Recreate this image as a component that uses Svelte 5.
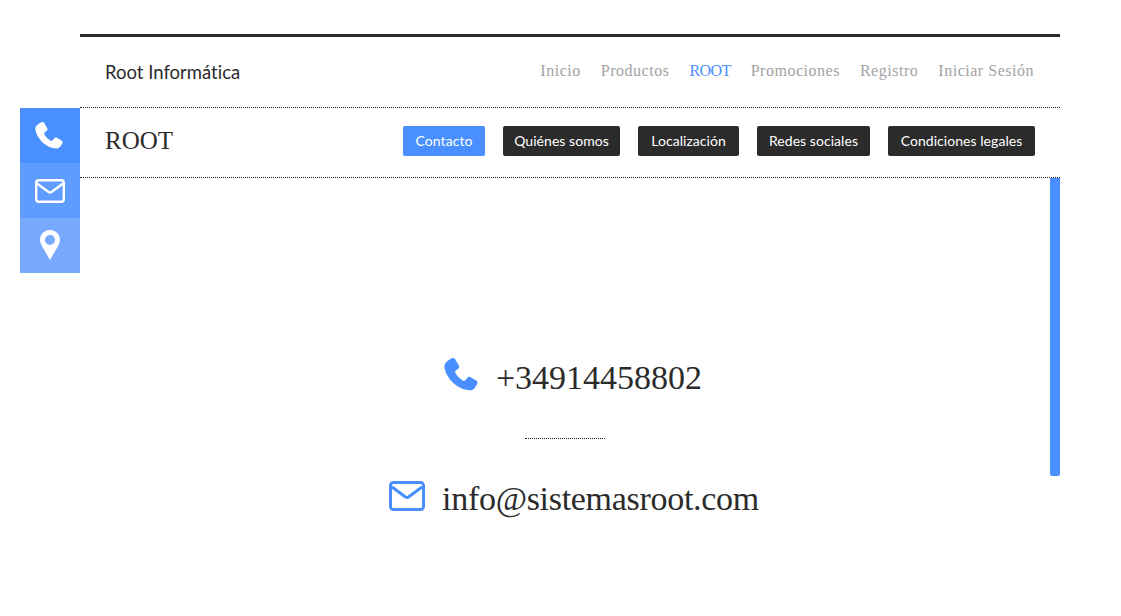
<script>
  const mainNav = [
    { label: 'Inicio' },
    { label: 'Productos' },
    { label: 'ROOT', active: true },
    { label: 'Promociones' },
    { label: 'Registro' },
    { label: 'Iniciar Sesión' }
  ];
  const tabs = ['Contacto', 'Quiénes somos', 'Localización', 'Redes sociales', 'Condiciones legales'];
  const phonePath = 'M3.200 1.500L5.500.2c.9-.5 1.900-.2 2.400.6l2.600 4.500c.4.8.3 1.600-.4 2.200L8.300 8.900c-.5.4-.6 1-.3 1.500 1.300 2.400 3.200 4.300 5.600 5.600.5.3 1.100.2 1.500-.3l1.400-1.800c.6-.7 1.400-.8 2.200-.4l4.100 2.400c.8.5 1.100 1.500.6 2.400l-1.300 2.300c-.8 1.400-2.300 2.300-3.900 2.200C9.400 22.300 1.700 14.600.3 6.700 0 4.500 1.200 2.600 3.200 1.500z';
</script>

<div class="page">
  <aside class="quick-links">
    <a href="#tel" class="quick one" aria-label="Teléfono">
      <svg class="handset" viewBox="0 0 24 24" width="28" height="28"><path d={phonePath} fill="#fff" /></svg>
    </a>
    <a href="#mail" class="quick two" aria-label="Correo">
      <svg viewBox="0 0 30 24" width="30" height="24"><rect x="1.200" y="1.200" width="27.600" height="21.600" rx="2.500" fill="none" stroke="#fff" stroke-width="2.400" /><path d="M2 4.500l11.500 8.500c.9.6 2.100.6 3 0L28 4.500" fill="none" stroke="#fff" stroke-width="2.400" /></svg>
    </a>
    <a href="#map" class="quick three" aria-label="Mapa">
      <svg class="pin" viewBox="0 0 20 30" width="20" height="30"><path fill-rule="evenodd" d="M10 0c5.500 0 10 4.300 10 9.700 0 2.300-.7 3.900-1.800 6L10 30 1.800 15.700C.7 13.600 0 12 0 9.700 0 4.300 4.500 0 10 0zm0 5a5 5 0 1 0 0 10 5 5 0 0 0 0-10z" fill="#fff" /></svg>
    </a>
  </aside>

  <div class="container">
    <header class="top">
      <span class="brand">Root Informática</span>
      <nav class="main-nav">
        {#each mainNav as item}
          <a href="#nav" class:active={item.active}>{item.label}</a>
        {/each}
      </nav>
    </header>

    <div class="sub">
      <h1>ROOT</h1>
      <div class="tabs">
        {#each tabs as tab, i}
          <button class:current={i === 0}>{tab}</button>
        {/each}
      </div>
    </div>

    <main class="content">
      <div class="bar"></div>
      <p class="line phone">
        <svg viewBox="0 0 24 24" width="34" height="34"><path d={phonePath} fill="#4a8fff" /></svg>
        <span>+34914458802</span>
      </p>
      <div class="divider"></div>
      <p class="line mail">
        <svg viewBox="0 0 36 30" width="36" height="30"><rect x="1.500" y="1.500" width="33" height="27" rx="3" fill="none" stroke="#4a8fff" stroke-width="3" /><path d="M3 6l13.500 10c.9.6 2.100.6 3 0L33 6" fill="none" stroke="#4a8fff" stroke-width="3" /></svg>
        <span>info@sistemasroot.com</span>
      </p>
    </main>
  </div>
</div>

<style>
  :global(body) {
    background: #fff;
    color: #2b2b2b;
  }

  .page {
    position: relative;
    height: 616px;
    padding: 34px 61px 0 80px;
    box-sizing: border-box;
  }

  .quick-links {
    position: absolute;
    left: 20px;
    top: 108px;
    width: 60px;
  }

  .quick {
    display: flex;
    align-items: center;
    justify-content: center;
    height: 55px;
  }

  .one { background: #4a8fff; }
  .two { background: #5f9cff; }
  .three { background: #77aaff; }

  .handset { margin-right: 2px; }
  .pin { margin-bottom: 2px; }

  .container {
    width: 980px;
    border-top: 3px solid #2b2b2b;
  }

  .top {
    display: flex;
    align-items: center;
    justify-content: space-between;
    height: 70px;
    padding: 0 26px 0 25px;
    border-bottom: 1px dotted #222;
  }

  .brand {
    margin-bottom: 1px;
    font: 18.500px Lato, sans-serif;
    font-variant-ligatures: none;
    color: #2b2b2b;
  }

  .main-nav {
    display: flex;
    gap: 20px;
    margin-bottom: 2px;
  }

  .main-nav a {
    font: 16px "Liberation Serif", serif;
    letter-spacing: 0.52px;
    color: #a3a3a3;
    text-decoration: none;
  }

  .main-nav a.active {
    color: #4a8fff;
    letter-spacing: -0.6px;
  }

  .sub {
    display: flex;
    align-items: center;
    justify-content: space-between;
    height: 70px;
    padding: 0 25px 3px;
    box-sizing: border-box;
    border-bottom: 1px dotted #222;
  }

  h1 {
    margin: 0;
    font: 400 25px "Liberation Serif", serif;
    color: #2b2b2b;
  }

  .tabs {
    display: grid;
    grid-template-columns: 82px 117px 101px 113px 147px;
    gap: 18px;
  }

  .tabs button {
    height: 30px;
    padding: 0 0 2px;
    border: 0;
    border-radius: 2px;
    background: #2b2b2b;
    color: #fff;
    font: 14px Lato, sans-serif;
    font-variant-ligatures: none;
    letter-spacing: 0.05px;
  }

  .tabs button.current {
    background: #4a8fff;
  }

  .content {
    position: relative;
    display: flex;
    flex-direction: column;
    align-items: center;
    padding: 176px 10px 0 0;
  }

  .bar {
    position: absolute;
    top: 0;
    right: 0;
    width: 10px;
    height: 298px;
    background: #4a8fff;
    border-radius: 0 0 2px 2px;
  }

  .line {
    display: flex;
    align-items: center;
    margin: 0;
    height: 48px;
    font: 34px "Liberation Serif", serif;
    color: #2b2b2b;
  }

  .phone { gap: 18px; margin-left: 16px; }
  .mail { gap: 17px; margin-left: 18px; letter-spacing: -0.3px; }
  .mail svg { margin-top: -6px; }
  .phone svg { margin-top: -6px; }

  .divider {
    width: 80px;
    margin: 36px 0;
    border-top: 1px dotted #222;
  }
</style>
